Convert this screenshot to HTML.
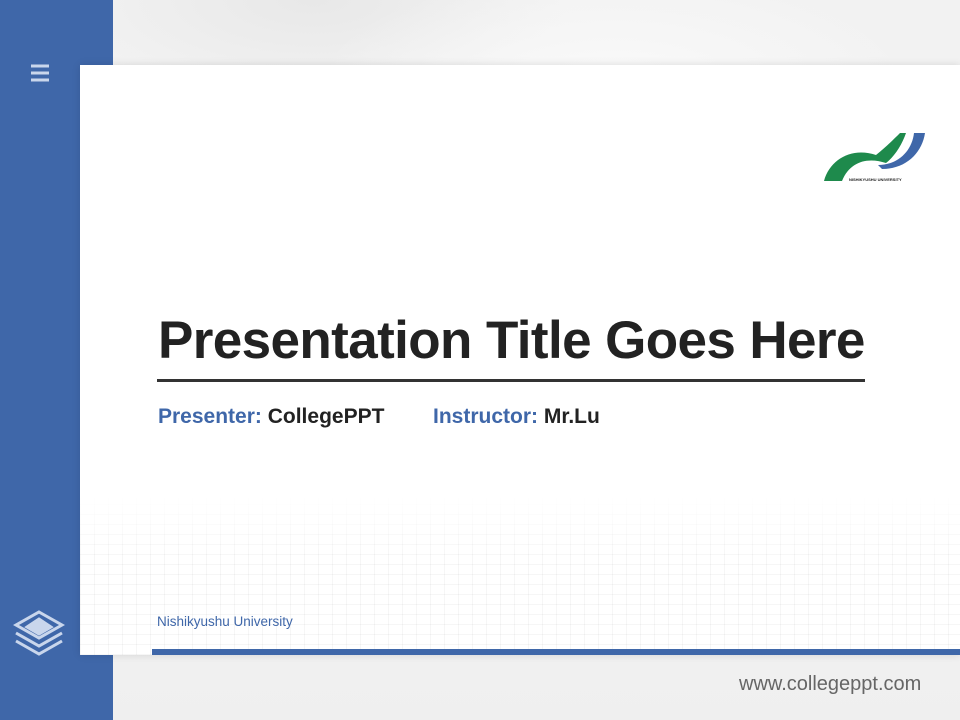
<!DOCTYPE html>
<html><head><meta charset="utf-8"><style>
body{margin:0;width:960px;height:720px;overflow:hidden;background:linear-gradient(180deg,#f2f2f2 0%,#f4f4f4 60%,#efefef 100%);font-family:"Liberation Sans",Arial,sans-serif;position:relative}
.top{position:absolute;left:113px;top:0;width:847px;height:65px;background:radial-gradient(ellipse 300px 120px at 500px 90px,#fafafa,transparent),radial-gradient(ellipse 260px 100px at 200px 0px,#e8e8e8,transparent)}
.side{position:absolute;left:0;top:0;width:113px;height:720px;background:#3f67a9}
.card{position:absolute;left:80px;top:65px;width:880px;height:590px;background:#fff;box-shadow:0 0 8px rgba(0,0,0,.12);overflow:hidden}
.wave{position:absolute;left:0;top:430px;width:880px;height:160px;background:repeating-linear-gradient(90deg,rgba(0,0,0,.035) 0 1px,transparent 1px 14px),repeating-linear-gradient(0deg,rgba(0,0,0,.035) 0 1px,transparent 1px 10px);-webkit-mask-image:linear-gradient(180deg,transparent,#000 40%)}
.title{position:absolute;left:78px;top:245px;font-size:53px;font-weight:bold;color:#222;letter-spacing:-0.6px;white-space:nowrap}
.line{position:absolute;left:77px;top:314px;width:708px;height:3px;background:#333}
.sub{position:absolute;top:340px;font-size:21px;font-weight:bold;color:#222;white-space:nowrap}
.sub b{color:#3f67a9}
.uni{position:absolute;left:77px;top:549px;font-size:13.5px;color:#3f67a9}
.bar{position:absolute;left:152px;top:649px;width:808px;height:6px;background:#3f67a9}
.url{position:absolute;left:739px;top:673px;font-size:20px;color:#666}
</style></head><body>
<div class="top"></div>
<div class="side">
<svg style="position:absolute;left:30px;top:63px" width="20" height="20"><g stroke="#c9d6ec" stroke-width="3"><line x1="1" y1="3" x2="19" y2="3"/><line x1="1" y1="10" x2="19" y2="10"/><line x1="1" y1="17" x2="19" y2="17"/></g></svg>
<svg style="position:absolute;left:13px;top:609px" width="52" height="48" fill="none" stroke="#c9d6ec" stroke-width="3"><path d="M26 3 L49 16 L26 29 L3 16 Z"/><path d="M3 24 L26 37 L49 24"/><path d="M3 32 L26 45 L49 32"/><path d="M14 18 L26 10 L38 18 L26 25 Z" fill="#c9d6ec"/></svg>
</div>
<div class="card">
<svg style="position:absolute;left:742px;top:66px" width="104" height="52"><path d="M2 50 C8 28 30 16 54 24 C64 16 72 8 78 2 L84 2 C80 14 72 26 64 32 C46 26 28 30 20 50 Z" fill="#1e8a4c"/><path d="M56 34 C76 34 90 20 92 2 L103 2 C100 22 84 38 60 38 Z" fill="#3f67a9"/><text x="27" y="50" font-size="4" font-family="Liberation Sans" font-weight="bold" fill="#222">NISHIKYUSHU UNIVERSITY</text></svg>
<div class="wave"></div>
<div class="title">Presentation Title Goes Here</div>
<div class="line"></div>
<div class="sub" style="left:78px"><b>Presenter:</b> CollegePPT</div>
<div class="sub" style="left:353px"><b>Instructor:</b> Mr.Lu</div>
<div class="uni">Nishikyushu University</div>
</div>
<div class="bar"></div>
<div class="url">www.collegeppt.com</div>
</body></html>
